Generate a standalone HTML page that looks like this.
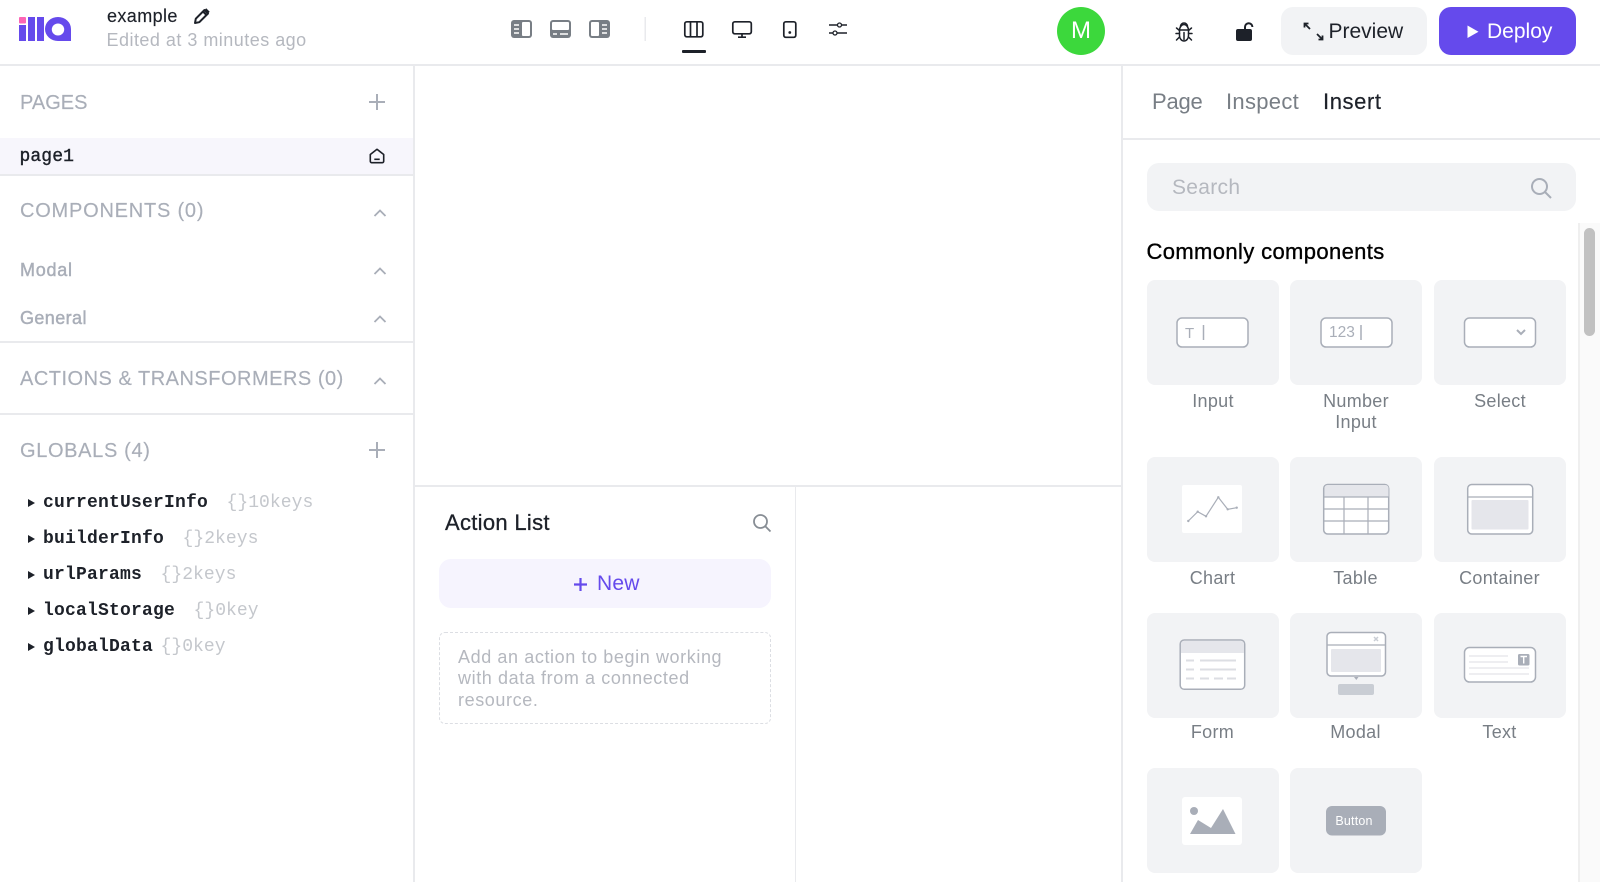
<!DOCTYPE html>
<html lang="en">
<head>
<meta charset="utf-8">
<title>example - ILLA Builder</title>
<style>
*{box-sizing:border-box}
html,body{margin:0;padding:0;width:1600px;height:882px;overflow:hidden;background:#fff}
body{position:relative;font-family:"Liberation Sans",sans-serif;color:#1d2129}
.t{position:absolute;white-space:nowrap;line-height:1}
.b{position:absolute;background:#e9eaed}
.card{position:absolute;width:132px;height:105px;background:#f2f3f5;border-radius:8px}
.lab{position:absolute;width:132px;text-align:center;font-size:18px;color:#787e85;line-height:21px;letter-spacing:.3px}
.sec{font-size:20px;color:#a9aeb8;letter-spacing:.55px;-webkit-text-stroke:.15px #a9aeb8}
.m{font-family:"Liberation Mono",monospace;font-size:18px;line-height:1}
.n{font-weight:700;color:#1d2129}
.v{color:#c4c7cc;letter-spacing:.05px}
svg{position:absolute;overflow:visible}
</style>
</head>
<body>

<!-- header -->
<div class="b" style="left:0;top:64px;width:1600px;height:2px"></div>
<svg style="left:0;top:0" width="80" height="60" viewBox="0 0 80 60">
  <rect x="19" y="17" width="7" height="6.500" rx="1" fill="#fc65b5"/>
  <rect x="19" y="25" width="7" height="16" fill="#654aec"/>
  <rect x="28" y="17" width="7" height="24" fill="#654aec"/>
  <rect x="37" y="17" width="7" height="24" fill="#654aec"/>
  <path fill-rule="evenodd" fill="#654aec" d="M58 17a13 12 0 0 1 13 12v12H58a13 12 0 0 1 0-24zm0 6.500a6.200 6 0 1 0 0 12a6.200 6 0 0 0 0-12z"/>
</svg>
<div class="t" style="left:107px;top:7px;font-size:18px;line-height:18px;letter-spacing:.4px;-webkit-text-stroke:.15px #1d2129">example</div>
<svg style="left:193px;top:7px" width="18" height="18" viewBox="0 0 18 18" fill="none" stroke="#1d2129" stroke-width="2" stroke-linejoin="round">
  <path d="M2 16l.8-4.300L11.500 3l3.500 3.500-8.700 8.700z"/><path d="M10 4.500l3.500 3.500"/><path d="M12.500 2l3.500 3.500"/>
</svg>
<div class="t" style="left:106.500px;top:31px;font-size:18px;line-height:18px;color:#b5b8bf;letter-spacing:.48px">Edited at 3 minutes ago</div>

<!-- layout toggles -->
<svg style="left:0;top:0" width="900" height="60" viewBox="0 0 900 60">
  <g>
    <rect x="511" y="20" width="21" height="18" rx="3" fill="#787e85"/>
    <rect x="522" y="22" width="8" height="14" rx="1" fill="#fff"/>
    <path d="M514 25h5M514 29h5M514 33h5" stroke="#fff" stroke-width="1.500"/>
  </g>
  <g>
    <rect x="550" y="20" width="21" height="18" rx="3" fill="#787e85"/>
    <rect x="552" y="22" width="17" height="8" rx="1" fill="#fff"/>
    <path d="M553 34h4M560 34h8" stroke="#fff" stroke-width="1.500"/>
  </g>
  <g>
    <rect x="589" y="20" width="21" height="18" rx="3" fill="#787e85"/>
    <rect x="591" y="22" width="8" height="14" rx="1" fill="#fff"/>
    <path d="M602 25h5M602 29h5M602 33h5" stroke="#fff" stroke-width="1.500"/>
  </g>
  <rect x="644.500" y="17" width="1.500" height="24" fill="#e9eaed"/>
  <g fill="none" stroke="#1d2129" stroke-width="1.700">
    <rect x="684.800" y="21.800" width="18" height="15" rx="2"/>
    <path d="M690.500 22v15M697 22v15"/>
    <rect x="732.800" y="21.800" width="18.500" height="12" rx="2"/>
    <path d="M742 34v3M738 37.200h8"/>
    <rect x="783.800" y="21.800" width="12" height="15.500" rx="2"/>
  </g>
  <path d="M829 25h18M829 33h18" stroke="#1d2129" stroke-width="1.500"/>
  <circle cx="789.800" cy="32.500" r="1.400" fill="#1d2129"/>
  <circle cx="839.500" cy="25" r="2" fill="#fff" stroke="#1d2129" stroke-width="1.300"/>
  <circle cx="835" cy="33" r="2" fill="#fff" stroke="#1d2129" stroke-width="1.300"/>
  <rect x="682" y="50" width="24" height="3" rx="1" fill="#1d2129"/>
</svg>

<!-- avatar -->
<div style="position:absolute;left:1057px;top:7px;width:48px;height:48px;border-radius:50%;background:#3cd83c;color:#fff;font-size:24px;line-height:48px;text-align:center">M</div>

<!-- bug -->
<svg style="left:1175px;top:22px" width="18" height="20" viewBox="0 0 18 20" fill="none" stroke="#1d2129" stroke-width="1.500" stroke-linecap="round">
  <path d="M4.500 8.500a4.500 6 0 0 1 9 0v5a4.500 5.500 0 0 1-9 0z"/>
  <path d="M5.500 4.500A3.500 3.500 0 0 1 12.500 4.500"/>
  <path d="M4 8h10M9 10.500v7M1.500 6l3 2.500M16.500 6l-3 2.500M1 11.500h3.500M17 11.500h-3.500M1.500 18l3-3M16.500 18l-3-3"/>
</svg>
<!-- lock -->
<svg style="left:1235px;top:22px" width="20" height="20" viewBox="0 0 20 20">
  <path d="M10 8V5a3.700 3.800 0 0 1 7.400 0" fill="none" stroke="#1d2129" stroke-width="2"/>
  <rect x="1" y="7" width="16" height="12" rx="2" fill="#1d2129"/>
</svg>

<!-- preview -->
<div style="position:absolute;left:1281px;top:7px;width:146px;height:48px;background:#f2f3f5;border-radius:12px"></div>
<svg style="left:1302px;top:21px" width="24" height="21" viewBox="0 0 24 21" fill="none" stroke="#1d2129" stroke-width="1.800">
  <path d="M2.500 2.500L8 8"/><path d="M2.500 6.500v-4h4"/>
  <path d="M15 13l5.500 5.500"/><path d="M20.500 14.500v4h-4"/>
</svg>
<div class="t" style="left:1328.500px;top:20px;font-size:21px;line-height:24px">Preview</div>

<!-- deploy -->
<div style="position:absolute;left:1439px;top:7px;width:137px;height:48px;background:#654aec;border-radius:12px"></div>
<svg style="left:1465.500px;top:25px" width="13" height="13" viewBox="0 0 13 13"><path d="M1.500 .5v12.500L12.500 6.700z" fill="#fff"/></svg>
<div class="t" style="left:1487px;top:20px;font-size:21px;line-height:24px;color:#fff">Deploy</div>

<!-- panel borders -->
<div class="b" style="left:413px;top:66px;width:2px;height:816px"></div>
<div class="b" style="left:1121px;top:66px;width:2px;height:816px"></div>
<div class="b" style="left:415px;top:485px;width:706px;height:2px"></div>
<div class="b" style="left:794.500px;top:487px;width:1.500px;height:395px"></div>

<!-- left panel -->
<div class="t sec" style="left:20px;top:93px;line-height:20px;letter-spacing:0">PAGES</div>
<svg style="left:368px;top:93px" width="18" height="18" viewBox="0 0 18 18"><path d="M9 1v16M1 9h16" stroke="#a9aeb8" stroke-width="2"/></svg>
<div style="position:absolute;left:0;top:138px;width:413px;height:36px;background:#f7f6fc"></div>
<div class="t m" style="left:19.500px;top:148px;font-size:18px;color:#1d2129;-webkit-text-stroke:.4px #1d2129;letter-spacing:.1px">page1</div>
<svg style="left:369px;top:148px" width="16" height="16" viewBox="0 0 16 16" fill="none" stroke="#1d2129" stroke-width="1.600" stroke-linejoin="round">
  <path d="M8 1.300L1.300 6.500v6.700a1.500 1.500 0 0 0 1.500 1.500h10.400a1.500 1.500 0 0 0 1.500-1.500V6.500z"/><path d="M5.300 11.300h5.400"/>
</svg>
<div class="b" style="left:0;top:174px;width:413px;height:1.500px"></div>

<div class="t sec" style="left:20px;top:201px;line-height:20px;letter-spacing:.78px">COMPONENTS (0)</div>
<svg style="left:373px;top:209px" width="14" height="8" viewBox="0 0 14 8"><path d="M1.500 7L7 1.500 12.500 7" fill="none" stroke="#a9aeb8" stroke-width="1.800"/></svg>
<div class="t" style="left:20px;top:261px;font-size:18px;line-height:18px;color:#a9aeb8;-webkit-text-stroke:.45px #a9aeb8;letter-spacing:.75px">Modal</div>
<svg style="left:373px;top:267px" width="14" height="8" viewBox="0 0 14 8"><path d="M1.500 7L7 1.500 12.500 7" fill="none" stroke="#a9aeb8" stroke-width="1.800"/></svg>
<div class="t" style="left:20px;top:309px;font-size:18px;line-height:18px;color:#a9aeb8;-webkit-text-stroke:.45px #a9aeb8;letter-spacing:.4px">General</div>
<svg style="left:373px;top:315px" width="14" height="8" viewBox="0 0 14 8"><path d="M1.500 7L7 1.500 12.500 7" fill="none" stroke="#a9aeb8" stroke-width="1.800"/></svg>
<div class="b" style="left:0;top:341px;width:413px;height:2px"></div>

<div class="t sec" style="left:20px;top:369px;line-height:20px;letter-spacing:.5px">ACTIONS &amp; TRANSFORMERS (0)</div>
<svg style="left:373px;top:377px" width="14" height="8" viewBox="0 0 14 8"><path d="M1.500 7L7 1.500 12.500 7" fill="none" stroke="#a9aeb8" stroke-width="1.800"/></svg>
<div class="b" style="left:0;top:413px;width:413px;height:2px"></div>

<div class="t sec" style="left:20px;top:441px;line-height:20px;letter-spacing:.65px">GLOBALS (4)</div>
<svg style="left:368px;top:441px" width="18" height="18" viewBox="0 0 18 18"><path d="M9 1v16M1 9h16" stroke="#a9aeb8" stroke-width="2"/></svg>

<svg style="left:27px;top:498px" width="9" height="152" viewBox="0 0 9 152" fill="#1d2129">
  <path d="M1 1v8l7-4z"/><path d="M1 37v8l7-4z"/><path d="M1 73v8l7-4z"/><path d="M1 109v8l7-4z"/><path d="M1 145v8l7-4z"/>
</svg>
<div class="t m n" style="left:43px;top:494px;letter-spacing:.2px">currentUserInfo</div>
<div class="t m v" style="left:226.500px;top:494px">{}10keys</div>
<div class="t m n" style="left:43px;top:530px;letter-spacing:.2px">builderInfo</div>
<div class="t m v" style="left:182.500px;top:530px">{}2keys</div>
<div class="t m n" style="left:43px;top:566px;letter-spacing:.2px">urlParams</div>
<div class="t m v" style="left:160.500px;top:566px">{}2keys</div>
<div class="t m n" style="left:43px;top:602px;letter-spacing:.2px">localStorage</div>
<div class="t m v" style="left:193.500px;top:602px">{}0key</div>
<div class="t m n" style="left:43px;top:638px;letter-spacing:.2px">globalData</div>
<div class="t m v" style="left:160.500px;top:638px">{}0key</div>

<!-- action list -->
<div class="t" style="left:445px;top:511px;font-size:22px;line-height:24px;letter-spacing:.3px;-webkit-text-stroke:.3px #1d2129">Action List</div>
<svg style="left:752px;top:513px" width="20" height="20" viewBox="0 0 20 20" fill="none" stroke="#878d94" stroke-width="1.800"><circle cx="8.500" cy="8.500" r="6.500"/><path d="M13.300 13.300L18.500 18.500"/></svg>
<div style="position:absolute;left:439px;top:559px;width:332px;height:49px;background:#f6f4fe;border-radius:12px"></div>
<svg style="left:573px;top:576.500px" width="15" height="15" viewBox="0 0 15 15"><path d="M7.500 1v13M1 7.500h13" stroke="#654aec" stroke-width="2.200"/></svg>
<div class="t" style="left:597px;top:572px;font-size:21px;line-height:24px;color:#654aec;letter-spacing:.2px">New</div>
<div style="position:absolute;left:439px;top:632px;width:332px;height:92px;border:1.500px dashed #dcdee3;border-radius:6px"></div>
<div class="t" style="left:458px;top:646.500px;font-size:18px;line-height:21.500px;color:#b5b8bf;letter-spacing:.6px;white-space:normal;width:310px">Add an action to begin working<br>with data from a connected<br>resource.</div>

<!-- right panel -->
<div class="t" style="left:1152px;top:90px;font-size:22px;line-height:24px;color:#787e85;letter-spacing:-.2px">Page</div>
<div class="t" style="left:1226px;top:90px;font-size:22px;line-height:24px;color:#787e85;letter-spacing:.3px">Inspect</div>
<div class="t" style="left:1323px;top:90px;font-size:22px;line-height:24px;color:#1d2129;letter-spacing:.6px;-webkit-text-stroke:.2px #1d2129">Insert</div>
<div class="b" style="left:1123px;top:138px;width:477px;height:1.500px"></div>

<div style="position:absolute;left:1147px;top:163px;width:429px;height:48px;background:#f2f3f5;border-radius:12px"></div>
<div class="t" style="left:1172px;top:176px;font-size:21px;line-height:24px;color:#b5b8bf;letter-spacing:.3px">Search</div>
<svg style="left:1530px;top:177px" width="22" height="22" viewBox="0 0 22 22" fill="none" stroke="#a9aeb8" stroke-width="2"><circle cx="9.500" cy="9.500" r="7.500"/><path d="M15 15L21 21"/></svg>

<div style="position:absolute;left:1578px;top:223px;width:22px;height:659px;background:#fafafa;border-left:2px solid #efefef"></div>
<div style="position:absolute;left:1584px;top:228px;width:11px;height:108px;background:#c1c1c1;border-radius:6px"></div>

<div class="t" style="left:1146.500px;top:240px;font-size:22px;line-height:24px;color:#000;letter-spacing:.37px;-webkit-text-stroke:.35px #000">Commonly components</div>

<!-- row 1 -->
<div class="card" style="left:1147px;top:280px"></div>
<div class="card" style="left:1290px;top:280px"></div>
<div class="card" style="left:1434px;top:280px"></div>
<svg style="left:0;top:0" width="1600" height="882" viewBox="0 0 1600 882" fill="none" stroke="#a9aeb8" stroke-width="1.500">
  <rect x="1177" y="318" width="71" height="29" rx="5" fill="#fff"/>
  <path d="M1203.500 325v15"/>
  <rect x="1321" y="318" width="71" height="29" rx="5" fill="#fff"/>
  <path d="M1361 325v15"/>
  <rect x="1464.500" y="318" width="71" height="29" rx="5" fill="#fff"/>
  <path d="M1517 330l4 4 4-4" stroke-width="2"/>
</svg>
<div class="t" style="left:1185px;top:326px;font-size:15px;line-height:16px;color:#a9aeb8">T</div>
<div class="t" style="left:1329px;top:325px;font-size:15.500px;line-height:16px;color:#a9aeb8">123</div>
<div class="lab" style="left:1147px;top:391px">Input</div>
<div class="lab" style="left:1290px;top:391px">Number<br>Input</div>
<div class="lab" style="left:1434px;top:391px">Select</div>

<!-- row 2 -->
<div class="card" style="left:1147px;top:457px"></div>
<div class="card" style="left:1290px;top:457px"></div>
<div class="card" style="left:1434px;top:457px"></div>
<svg style="left:0;top:0" width="1600" height="882" viewBox="0 0 1600 882" fill="none" stroke="#a9aeb8" stroke-width="1.500">
  <rect x="1182" y="485" width="60" height="48" rx="2" fill="#fff" stroke="none"/>
  <path d="M1188.300 521L1197.700 511.700L1206 516.300L1218.300 497.300L1227.700 509.300L1236.700 507.700" stroke-width="1.200"/>
  <g fill="#a9aeb8" stroke="none"><circle cx="1188.300" cy="521" r="1.200"/><circle cx="1197.700" cy="511.700" r="1.200"/><circle cx="1206" cy="516.300" r="1.200"/><circle cx="1218.300" cy="497.300" r="1.200"/><circle cx="1227.700" cy="509.300" r="1.200"/><circle cx="1236.700" cy="507.700" r="1.200"/></g>

  <rect x="1323.700" y="484.500" width="65" height="49.500" rx="4" fill="#fff"/>
  <path d="M1324.500 497v-9a3 3 0 0 1 3-3h58a3 3 0 0 1 3 3v9z" fill="#e5e6eb" stroke="none"/>
  <path d="M1324 497h64.500M1324 509h64.500M1324 521h64.500M1344 497v37M1368 497v37" stroke-width="1.200"/>

  <rect x="1467.700" y="484.500" width="65" height="49.500" rx="4" fill="#fff"/>
  <path d="M1468 497h64.500" stroke-width="1.200"/>
  <rect x="1471.500" y="500" width="57" height="29.500" rx="1" fill="#e5e6eb" stroke="none"/>
</svg>
<div class="lab" style="left:1146.500px;top:567.500px">Chart</div>
<div class="lab" style="left:1289.500px;top:567.500px">Table</div>
<div class="lab" style="left:1433.500px;top:567.500px">Container</div>

<!-- row 3 -->
<div class="card" style="left:1147px;top:613px"></div>
<div class="card" style="left:1290px;top:613px"></div>
<div class="card" style="left:1434px;top:613px"></div>
<svg style="left:0;top:0" width="1600" height="882" viewBox="0 0 1600 882" fill="none" stroke="#a9aeb8" stroke-width="1.500">
  <rect x="1180.200" y="640" width="64.500" height="49.300" rx="4" fill="#fff"/>
  <path d="M1181 653v-9a3 3 0 0 1 3-3h57a3 3 0 0 1 3 3v9z" fill="#e5e6eb" stroke="none"/>
  <path d="M1186 660.500h8M1200 660.500h36M1186 669.500h8M1200 669.500h36M1186 678.500h8M1200 678.500h9M1214 678.500h9M1227 678.500h9" stroke="#dcdee3" stroke-width="2"/>

  <rect x="1327" y="632.500" width="58.500" height="43.500" rx="4" fill="#fff"/>
  <path d="M1327.500 645h58" stroke-width="1.200"/>
  <rect x="1331" y="649" width="50" height="23" rx="1" fill="#e5e6eb" stroke="none"/>
  <path d="M1374 637l4 4M1378 637l-4 4" stroke="#c9cdd4"/>
  <path d="M1354 677h4.500l-2.200 3z" fill="#a9aeb8" stroke="none"/>
  <rect x="1338" y="684" width="36" height="11" rx="2" fill="#c9cdd4" stroke="none"/>

  <rect x="1464.500" y="647.500" width="71" height="34.500" rx="5" fill="#fff"/>
  <path d="M1469 656h39M1469 662h39M1469 668h60M1469 674h60" stroke="#dcdee3" stroke-width="1"/>
  <rect x="1518" y="654" width="11.500" height="11.500" rx="1.500" fill="#a9aeb8" stroke="none"/>
  <path d="M1520.500 656.500h6.500M1523.700 656.500v7" stroke="#fff" stroke-width="1.400"/>
</svg>
<div class="lab" style="left:1146.500px;top:722px">Form</div>
<div class="lab" style="left:1289.500px;top:722px">Modal</div>
<div class="lab" style="left:1433.500px;top:722px">Text</div>

<!-- row 4 -->
<div class="card" style="left:1147px;top:768px"></div>
<div class="card" style="left:1290px;top:768px"></div>
<svg style="left:0;top:0" width="1600" height="882" viewBox="0 0 1600 882">
  <rect x="1182" y="797" width="60" height="48" rx="3" fill="#fff"/>
  <circle cx="1194" cy="811" r="4" fill="#a9aeb8"/>
  <path d="M1190 834L1198 820L1211 828L1223 809L1235.500 834z" fill="#a9aeb8"/>
  <rect x="1326" y="806" width="60" height="29.500" rx="6" fill="#a9aeb8"/>
</svg>
<div class="t" style="left:1326px;top:814px;width:56px;text-align:center;font-size:12.500px;line-height:14px;color:#fff;letter-spacing:.2px">Button</div>

</body>
</html>
